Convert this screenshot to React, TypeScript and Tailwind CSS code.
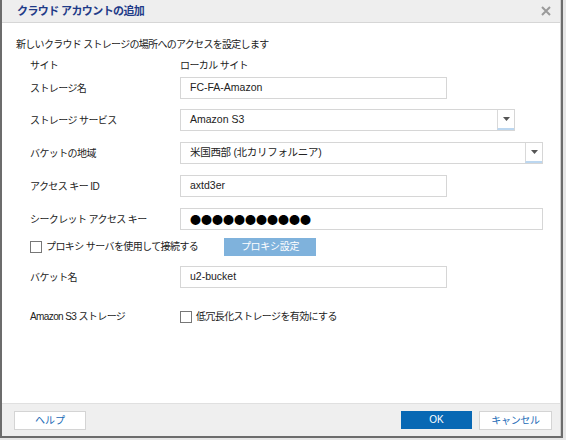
import React from 'react'

const font = { fontFamily: '"Liberation Sans", "Noto Sans CJK JP", sans-serif' }
const cjk = { fontFamily: '"Noto Sans CJK JP", sans-serif' }

function Arrow() {
  return (
    <div className="flex w-[17px] shrink-0 items-center justify-center self-stretch border-l border-[#d9d9d9] border-b-2 border-b-[#bcd7f0]">
      <svg width="7" height="4" viewBox="0 0 7 4">
        <path d="M0 0h7L3.5 4z" fill="#555" />
      </svg>
    </div>
  )
}

function Row({ label, mt, children }: { label: string; mt: string; children: React.ReactNode }) {
  return (
    <div className={`flex items-center ${mt}`}>
      <div className="w-[150px] shrink-0 tracking-[-0.6px]">{label}</div>
      {children}
    </div>
  )
}

function TextBox({ value, w }: { value: string; w: string }) {
  return (
    <div className={`flex h-[22px] ${w} items-center border border-[#d6d6d6] bg-white pl-[9px] text-[10.5px] text-[#222]`}>
      {value}
    </div>
  )
}

function Checkbox() {
  return <span className="inline-block h-[12px] w-[12px] shrink-0 border border-[#777] bg-white" />
}

export default function App() {
  return (
    <div className="flex h-[440px] w-[566px] bg-[#e6e6e6]" style={font}>
      <div className="flex h-[438px] w-[563px] bg-[#6c6c6c] px-[2px] pb-[2px]">
        <div className="flex h-[436px] w-[559px] flex-col border-r border-[#cfcfcf] bg-white text-[10px] text-[#222]">
          {/* Title bar */}
          <div className="flex h-[23px] shrink-0 items-center justify-between border-b border-[#d6d6d6] bg-[#eeeeee] pl-[15px] pr-[8px]">
            <span className="text-[11px] font-bold tracking-[-0.6px] text-[#1f3b88]">クラウド アカウントの追加</span>
            <svg width="10" height="10" viewBox="0 0 10 10" className="mr-[1px]">
              <path d="M1 1l8 8M9 1l-8 8" stroke="#9a9a9a" strokeWidth="2" />
            </svg>
          </div>

          {/* Body */}
          <div className="flex flex-1 flex-col pl-[28px]">
            <div className="-ml-[14px] mt-[15px] h-[14px] leading-[14px] tracking-[-0.7px]">
              新しいクラウド ストレージの場所へのアクセスを設定します
            </div>

            <Row label="サイト" mt="mt-[6px]">
              <span className="h-[14px] leading-[14px] tracking-[-0.6px]">ローカル サイト</span>
            </Row>

            <Row label="ストレージ名" mt="mt-[4px]">
              <TextBox value="FC-FA-Amazon" w="w-[267px]" />
            </Row>

            <Row label="ストレージ サービス" mt="mt-[10px]">
              <div className="flex h-[22px] w-[335px] items-stretch border border-[#d6d6d6] bg-white">
                <div className="flex flex-1 items-center pl-[9px] text-[10.5px]">Amazon S3</div>
                <Arrow />
              </div>
            </Row>

            <Row label="バケットの地域" mt="mt-[11px]">
              <div className="flex h-[22px] w-[363px] items-stretch border border-[#d6d6d6] bg-white">
                <div className="flex flex-1 items-center pl-[9px] text-[10.5px] tracking-[-0.3px]">米国西部 (北カリフォルニア)</div>
                <Arrow />
              </div>
            </Row>

            <Row label="アクセス キー ID" mt="mt-[11px]">
              <TextBox value="axtd3er" w="w-[267px]" />
            </Row>

            <Row label="シークレット アクセス キー" mt="mt-[11px]">
              <div className="flex h-[22px] w-[363px] items-center border border-[#d6d6d6] bg-white pl-[9px] text-[11px] text-black" style={cjk}>
                ●●●●●●●●●●●
              </div>
            </Row>

            <div className="mt-[7px] flex h-[19px] items-center">
              <Checkbox />
              <span className="ml-[4px] w-[178px] tracking-[-0.6px]">プロキシ サーバを使用して接続する</span>
              <div className="flex h-[18px] w-[92px] items-center justify-center bg-[#7fb2dc] tracking-[-0.3px] text-white">プロキシ設定</div>
            </div>

            <Row label="バケット名" mt="mt-[10px]">
              <TextBox value="u2-bucket" w="w-[267px]" />
            </Row>

            <Row label="Amazon S3 ストレージ" mt="mt-[21px]">
              <div className="flex h-[14px] items-center">
                <Checkbox />
                <span className="ml-[4px] tracking-[-0.6px]">低冗長化ストレージを有効にする</span>
              </div>
            </Row>
          </div>

          {/* Footer */}
          <div className="flex h-[33px] shrink-0 items-center justify-between border-t border-[#e0e0e0] bg-[#efefef] pl-[12px] pr-[8px]">
            <button className="h-[19px] w-[72px] border border-[#d4d4d4] bg-white text-[10px] text-[#1a6ab6]">ヘルプ</button>
            <div className="flex gap-[7px]">
              <button className="h-[18px] w-[71px] bg-[#0868b4] text-[10px] text-white">OK</button>
              <button className="h-[19px] w-[73px] border border-[#d4d4d4] bg-white text-[10px] tracking-[-0.3px] text-[#1a6ab6]">キャンセル</button>
            </div>
          </div>
        </div>
      </div>
    </div>
  )
}
